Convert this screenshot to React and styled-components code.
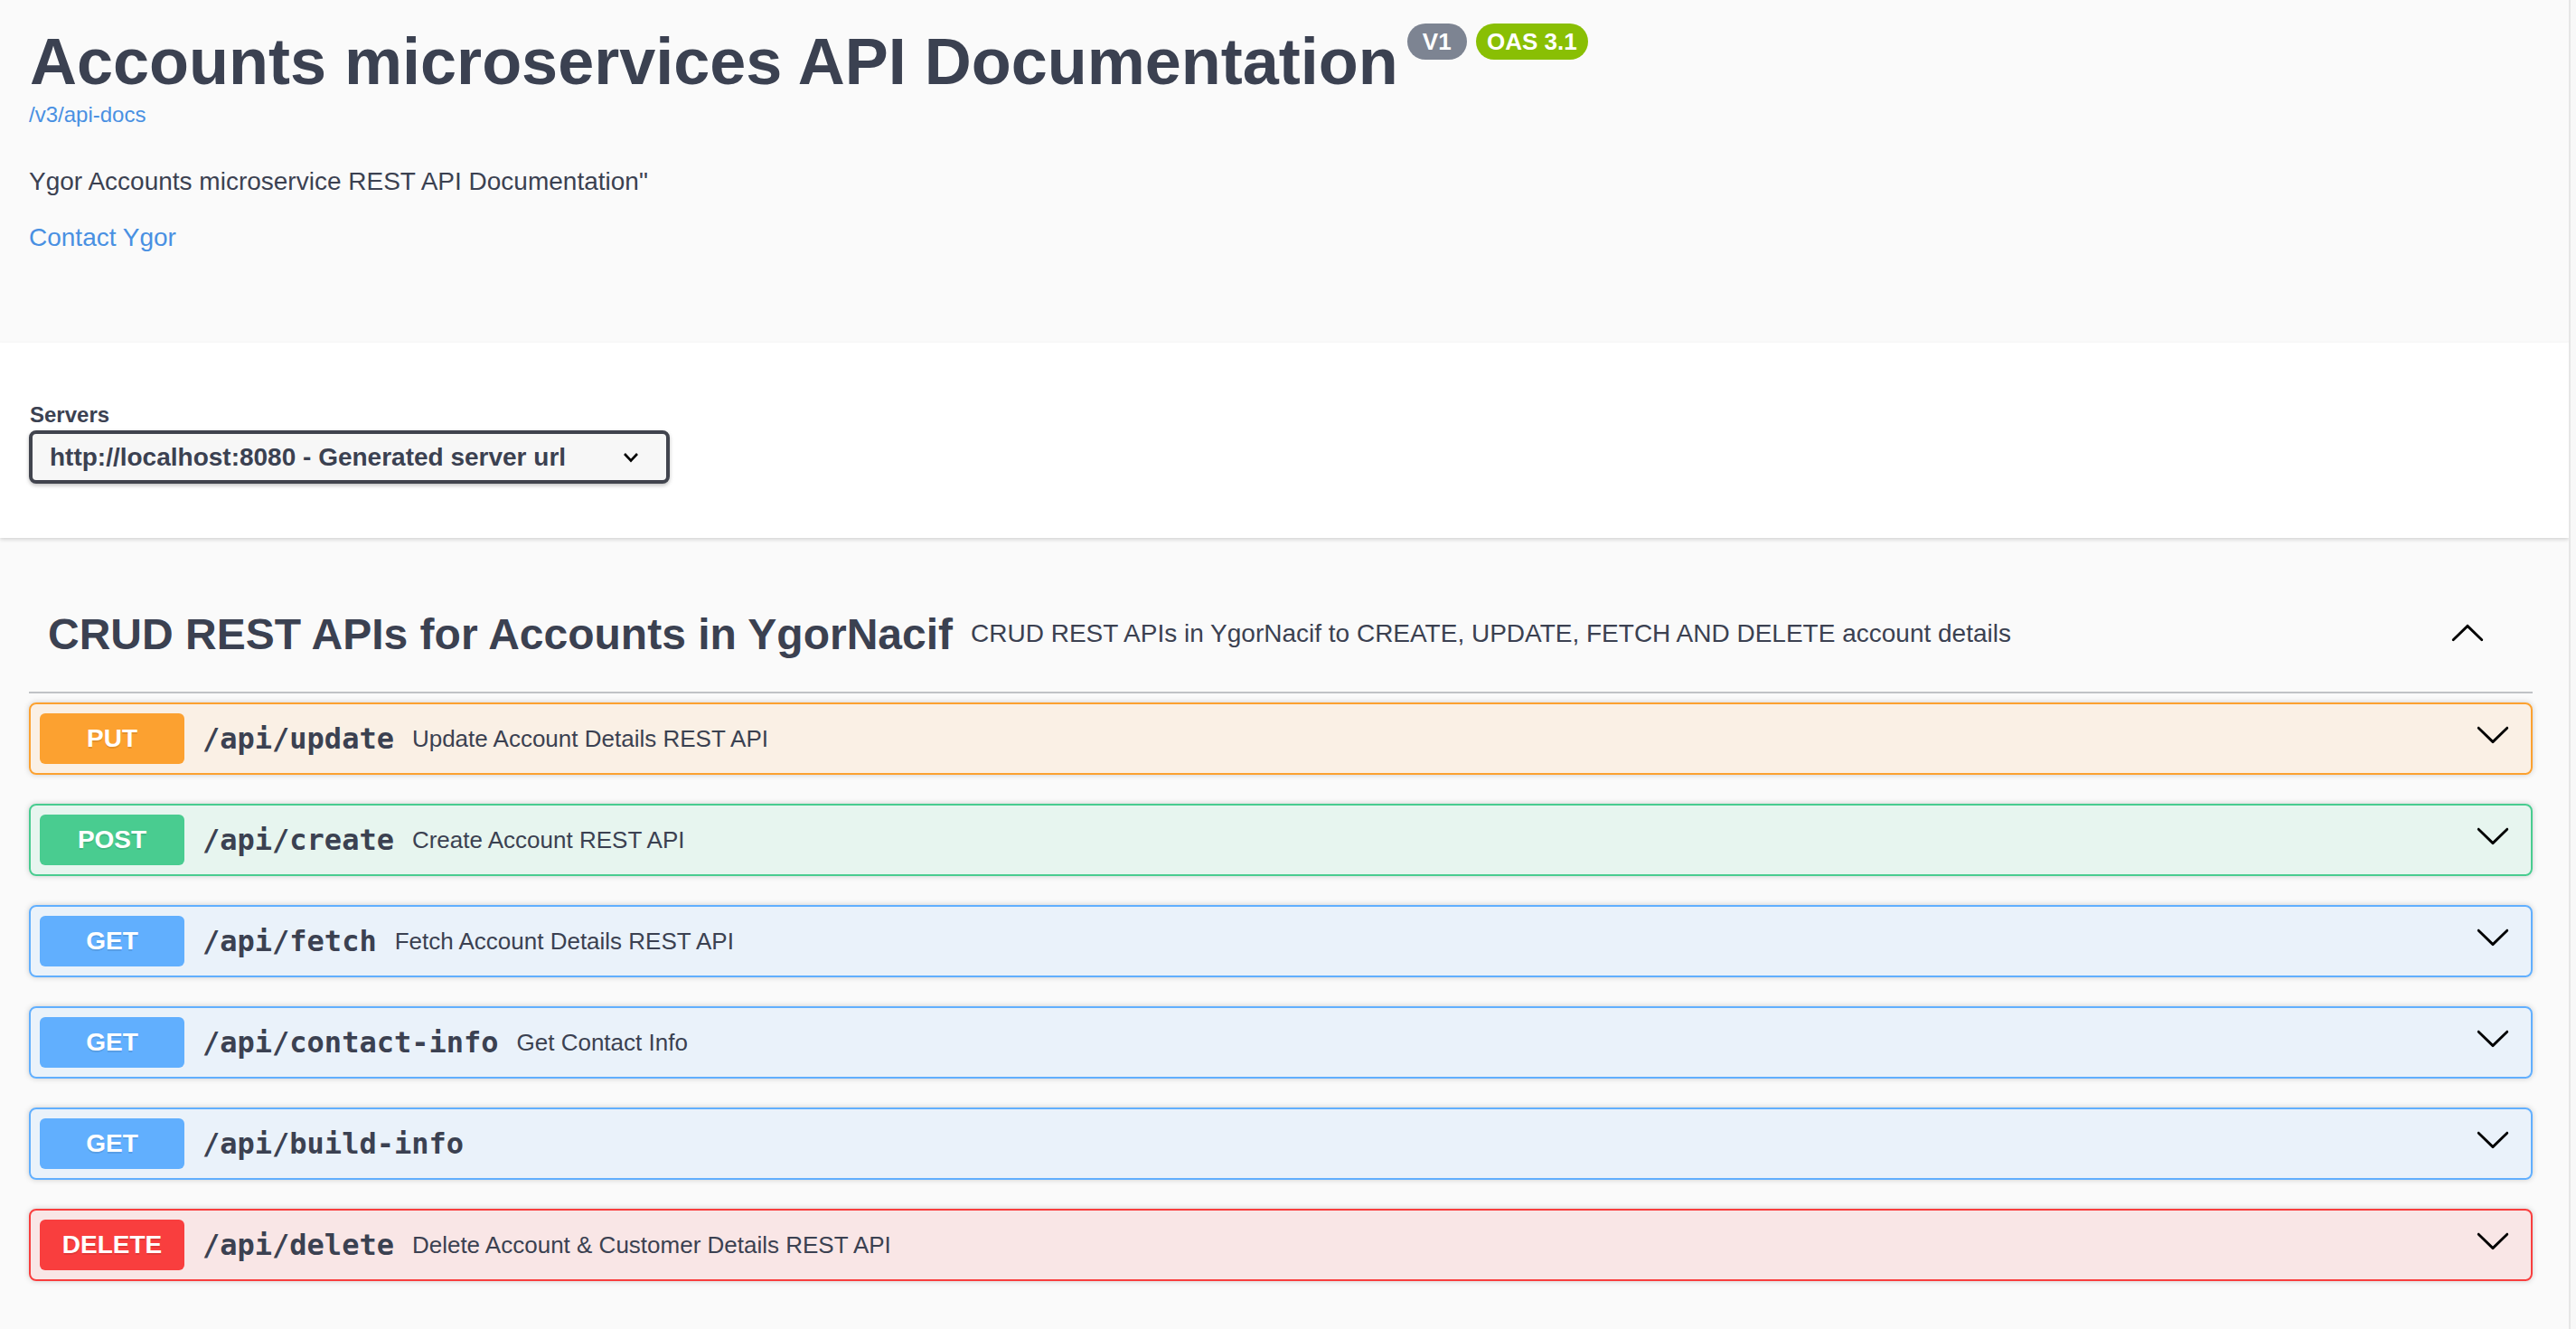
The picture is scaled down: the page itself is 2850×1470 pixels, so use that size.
import React from 'react';
import styled, { createGlobalStyle } from 'styled-components';

const GlobalStyle = createGlobalStyle`
  html, body {
    margin: 0;
    padding: 0;
    background: #fafafa;
    overflow: hidden;
  }
  body {
    font-family: "Liberation Sans", Arial, sans-serif;
    color: #3b4151;
  }
  * {
    box-sizing: border-box;
  }
`;

const METHOD_COLORS = {
  PUT: '#fca130',
  POST: '#49cc90',
  GET: '#61affe',
  DELETE: '#f93e3e',
};

const METHOD_TINTS = {
  PUT: 'rgba(252, 161, 48, 0.1)',
  POST: 'rgba(73, 204, 144, 0.1)',
  GET: 'rgba(97, 175, 254, 0.1)',
  DELETE: 'rgba(249, 62, 62, 0.1)',
};

const operations = [
  { method: 'PUT', path: '/api/update', summary: 'Update Account Details REST API' },
  { method: 'POST', path: '/api/create', summary: 'Create Account REST API' },
  { method: 'GET', path: '/api/fetch', summary: 'Fetch Account Details REST API' },
  { method: 'GET', path: '/api/contact-info', summary: 'Get Contact Info' },
  { method: 'GET', path: '/api/build-info', summary: '' },
  { method: 'DELETE', path: '/api/delete', summary: 'Delete Account & Customer Details REST API' },
];

const Page = styled.div`
  display: flex;
  min-height: 100vh;
`;

const Main = styled.div`
  flex: 1;
  min-width: 0;
  background: #fafafa;
`;

// thin scrollbar track on the right edge of the window
const ScrollTrack = styled.div`
  width: 8px;
  flex-shrink: 0;
  background: #f8f8f8;
  border-left: 2px solid #e6e6e6;
`;

const Wrapper = styled.div`
  padding: 0 40px 0 32px;
`;

const InfoSection = styled(Wrapper)`
  padding-top: 26px;
  padding-bottom: 96px;
`;

const TitleRow = styled.div`
  display: flex;
  align-items: flex-start;
  gap: 10px;
`;

const Title = styled.h2`
  margin: 0 0 0 1px;
  font-size: 72px;
  line-height: 84px;
  font-weight: 700;
  color: #3b4151;
`;

const VersionBadge = styled.span`
  display: inline-flex;
  align-items: center;
  justify-content: center;
  width: ${(p) => p.width}px;
  height: 40px;
  border-radius: 114px;
  background: ${(p) => p.bg};
  color: #fff;
  font-size: 26px;
  font-weight: 700;
  line-height: 40px;
`;

const SpecLink = styled.a`
  display: block;
  margin-top: 3px;
  font-size: 24px;
  line-height: 28px;
  color: #4990e2;
  text-decoration: none;
`;

const Description = styled.p`
  margin: 40px 0 0;
  font-size: 28px;
  line-height: 40px;
  color: #3b4151;
`;

const ContactLink = styled.a`
  display: block;
  margin-top: 22px;
  font-size: 28px;
  line-height: 40px;
  color: #4990e2;
  text-decoration: none;
`;

const SchemeContainer = styled.section`
  background: #fff;
  box-shadow: 0 2px 4px 0 rgba(0, 0, 0, 0.15);
  padding: 66px 0 60px;
`;

const ServersLabel = styled.div`
  font-size: 24px;
  line-height: 28px;
  font-weight: 700;
  color: #3b4151;
  margin: 0 0 3px 1px;
`;

const SelectBox = styled.div`
  display: flex;
  align-items: center;
  justify-content: space-between;
  width: 709px;
  height: 59px;
  padding: 0 30px 0 19px;
  border: 4px solid #41444e;
  border-radius: 8px;
  background: #f7f7f7;
  box-shadow: 0 2px 4px 0 rgba(0, 0, 0, 0.25);
  font-size: 28px;
  font-weight: 700;
  color: #3b4151;
`;

const Operations = styled(Wrapper)`
  padding-top: 38px;
`;

const TagHeader = styled.div`
  display: flex;
  align-items: center;
  height: 134px;
  padding: 4px 52px 0 21px;
  border-bottom: 2px solid rgba(59, 65, 81, 0.3);
  margin-bottom: 10px;
`;

const TagTitle = styled.h3`
  margin: 0;
  font-size: 48px;
  font-weight: 700;
  color: #3b4151;
  white-space: nowrap;
`;

const TagDescription = styled.small`
  flex: 1;
  padding: 0 20px;
  font-size: 28px;
  color: #3b4151;
`;

const OpBlock = styled.div`
  display: flex;
  align-items: center;
  height: 80px;
  padding: 0 10px;
  margin-bottom: 32px;
  border: 2px solid ${(p) => METHOD_COLORS[p.method]};
  border-radius: 8px;
  background: ${(p) => METHOD_TINTS[p.method]};
  box-shadow: 0 0 6px rgba(0, 0, 0, 0.19);
`;

const MethodBadge = styled.span`
  min-width: 160px;
  padding: 12px 0;
  border-radius: 6px;
  background: ${(p) => METHOD_COLORS[p.method]};
  color: #fff;
  text-align: center;
  font-size: 28px;
  line-height: 32px;
  font-weight: 700;
  text-shadow: 0 2px 0 rgba(0, 0, 0, 0.1);
`;

const OpPath = styled.span`
  padding: 0 20px;
  font-family: "DejaVu Sans Mono", "Liberation Mono", monospace;
  font-size: 32px;
  font-weight: 700;
  color: #3b4151;
  white-space: nowrap;
`;

const OpSummary = styled.span`
  flex: 1;
  font-size: 26px;
  color: #3b4151;
`;

const ArrowButton = styled.span`
  display: flex;
  margin: ${(p) => (p.up ? '0' : '0 12px 10px auto')};
  transform: ${(p) => (p.up ? 'rotate(180deg)' : 'none')};
`;

const Arrow = ({ up }) => (
  <ArrowButton up={up ? 1 : 0}>
    <svg width="40" height="40" viewBox="0 0 20 20" aria-hidden="true">
      <path
        fill="#000"
        d="M17.418 6.109c.272-.268.709-.268.979 0s.271.701 0 .969l-7.908 7.83c-.27.268-.707.268-.979 0l-7.908-7.83c-.27-.268-.27-.701 0-.969.271-.268.709-.268.979 0L10 13.25l7.418-7.141z"
      />
    </svg>
  </ArrowButton>
);

const SelectChevron = () => (
  <svg width="18" height="12" viewBox="0 0 18 12" aria-hidden="true">
    <polyline points="2,2 9,9.5 16,2" fill="none" stroke="#000" strokeWidth="2.6" />
  </svg>
);

const App = () => (
  <>
    <GlobalStyle />
    <Page>
      <Main>
        <InfoSection>
          <TitleRow>
            <Title>Accounts microservices API Documentation</Title>
            <VersionBadge bg="#7d8492" width={66}>V1</VersionBadge>
            <VersionBadge bg="#89bf04" width={124}>OAS 3.1</VersionBadge>
          </TitleRow>
          <SpecLink href="#">/v3/api-docs</SpecLink>
          <Description>Ygor Accounts microservice REST API Documentation"</Description>
          <ContactLink href="#">Contact Ygor</ContactLink>
        </InfoSection>

        <SchemeContainer>
          <Wrapper>
            <ServersLabel>Servers</ServersLabel>
            <SelectBox>
              <span>http://localhost:8080 - Generated server url</span>
              <SelectChevron />
            </SelectBox>
          </Wrapper>
        </SchemeContainer>

        <Operations>
          <TagHeader>
            <TagTitle>CRUD REST APIs for Accounts in YgorNacif</TagTitle>
            <TagDescription>
              CRUD REST APIs in YgorNacif to CREATE, UPDATE, FETCH AND DELETE account details
            </TagDescription>
            <Arrow up />
          </TagHeader>
          {operations.map((op) => (
            <OpBlock key={op.path} method={op.method}>
              <MethodBadge method={op.method}>{op.method}</MethodBadge>
              <OpPath>{op.path}</OpPath>
              <OpSummary>{op.summary}</OpSummary>
              <Arrow />
            </OpBlock>
          ))}
        </Operations>
      </Main>
      <ScrollTrack />
    </Page>
  </>
);

export default App;
